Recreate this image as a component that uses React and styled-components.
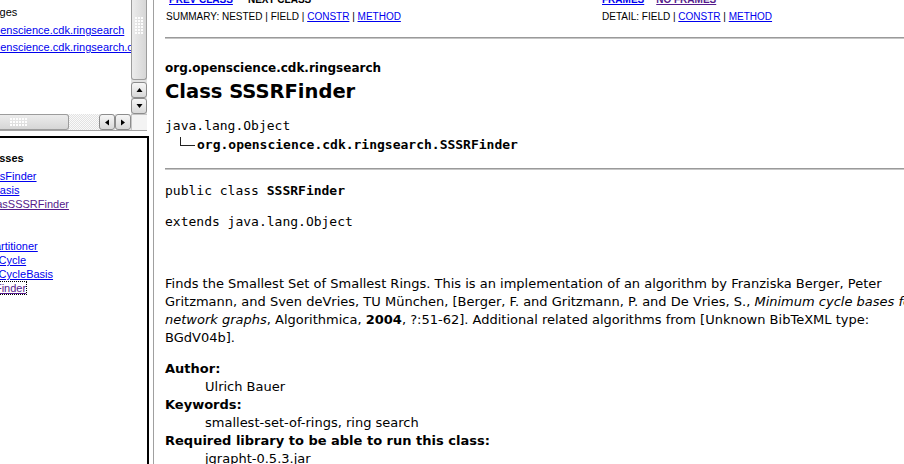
import React from "react";
import styled, { createGlobalStyle } from "styled-components";

const GlobalStyle = createGlobalStyle`
  html, body {
    margin: 0;
    padding: 0;
    background: #fff;
  }
  body {
    width: 904px;
    height: 464px;
    overflow: hidden;
  }
`;

const Window = styled.div`
  display: flex;
  width: 904px;
  height: 464px;
  overflow: hidden;
  background: #fff;
`;

/* ---------- left frames ---------- */

const LeftColumn = styled.div`
  flex: none;
  width: 149px;
  display: flex;
  flex-direction: column;
`;

const TopFrame = styled.div`
  flex: none;
  width: 147px;
  height: 130px;
  display: grid;
  grid-template-columns: 131px 16px;
  grid-template-rows: 114px 16px;
  border-bottom: 1px solid #a4a4a4;
`;

const ScrollView = styled.div`
  overflow: hidden;
  font-family: "Liberation Sans", Arial, sans-serif;
  font-size: 11px;
  color: #000;
`;

const Scrolled = styled.div`
  margin-left: ${(p) => -p.$x}px;
  padding-top: ${(p) => p.$top}px;
  white-space: nowrap;
`;

const FrameHeading = styled.div`
  line-height: ${(p) => p.$lh}px;
  font-weight: ${(p) => (p.$bold ? 700 : 400)};
`;

const FrameItem = styled.div`
  line-height: ${(p) => p.$lh}px;
  min-height: ${(p) => p.$lh}px;
`;

const FrameLink = styled.a`
  color: ${(p) => (p.$visited ? "#551a8b" : "#0000ee")};
  text-decoration: underline;
  cursor: pointer;
  outline: ${(p) => (p.$focus ? "1px dotted #000" : "none")};
`;

const VScroll = styled.div`
  display: flex;
  flex-direction: column;
  background: #e2e2e2;
`;

const VThumb = styled.div`
  flex: none;
  height: 80px;
  box-sizing: border-box;
  border: 1px solid #9c9c9c;
  border-top: none;
  border-radius: 0 0 3px 3px;
  background: linear-gradient(to right, #ececec, #d6d6d6);
  display: flex;
  justify-content: center;
  padding-top: 17px;
  margin-bottom: 2px;
`;

const HScroll = styled.div`
  display: flex;
  background: repeating-conic-gradient(#e2e2e2 0 25%, #fafafa 0 50%) 0 0 / 2px 2px;
`;

const HThumb = styled.div`
  flex: none;
  width: 69px;
  box-sizing: border-box;
  border: 1px solid #9c9c9c;
  border-left: none;
  border-radius: 0 3px 3px 0;
  background: linear-gradient(#ececec, #d6d6d6);
  display: flex;
  align-items: center;
  padding-left: 10px;
  margin-right: auto;
`;

const Grip = styled.div`
  width: ${(p) => p.$w}px;
  height: ${(p) => p.$h}px;
  background: radial-gradient(circle at 1px 1px, #fdfdfd 0.9px, transparent 1.1px) 0 0 / 3px 3px;
`;

const ArrowButton = styled.div`
  flex: none;
  width: 16px;
  height: 16px;
  box-sizing: border-box;
  border: 1px solid #8c8c8c;
  border-radius: 3px;
  background: linear-gradient(#f6f6f6, #d8d8d8);
  display: flex;
  align-items: center;
  justify-content: center;
`;

const Corner = styled.div`
  background: #f3f3f3;
  border-left: 1px solid #c4c4c4;
  border-top: 1px solid #c4c4c4;
`;

const BottomFrame = styled.div`
  flex: 1;
  margin-top: 5px;
  width: 149px;
  box-sizing: border-box;
  border-top: 2px solid #000;
  border-right: 2px solid #000;
  overflow: hidden;
  font-family: "Liberation Sans", Arial, sans-serif;
  font-size: 11px;
`;

const Splitter = styled.div`
  flex: none;
  width: 4px;
  border-right: 1px solid #a0a0a0;
`;

/* ---------- right frame ---------- */

const RightFrame = styled.div`
  flex: 1;
  overflow: hidden;
  padding-left: 11px;
  font-family: "DejaVu Sans", sans-serif;
  font-size: 13px;
  color: #000;
`;

const Page = styled.div`
  width: 758px;
  margin-top: -7px;
`;

const NavBar = styled.div`
  display: grid;
  grid-template-columns: 437px auto;
  row-gap: 4px;
  font-family: "Liberation Sans", Arial, sans-serif;
  font-size: 10px;
  line-height: 13px;
  white-space: nowrap;
`;

const NavCell = styled.div`
  font-weight: ${(p) => (p.$bold ? 700 : 400)};
  padding-left: ${(p) => p.$pad || 0}px;
`;

const NavLink = styled.a`
  color: ${(p) => (p.$visited ? "#551a8b" : "#0000ee")};
  text-decoration: underline;
  margin-left: ${(p) => p.$gap || 0}px;
  cursor: pointer;
`;

const NavText = styled.span`
  margin-left: ${(p) => p.$gap || 0}px;
`;

const Rule = styled.hr`
  margin: ${(p) => p.$top}px 0 0;
  height: 0;
  border: none;
  border-top: 1px solid #9a9a9a;
  border-bottom: 1px solid #c6c6c6;
`;

const PackageName = styled.div`
  margin-top: 22px;
  font-size: 12px;
  line-height: 15px;
  font-weight: 700;
`;

const ClassTitle = styled.h2`
  margin: 4px 0 0;
  font-size: 19.5px;
  line-height: 23px;
  font-weight: 700;
`;

const Tree = styled.div`
  margin-top: 13px;
  font-family: "DejaVu Sans Mono", monospace;
  font-size: 13px;
`;

const TreeRow = styled.div`
  line-height: 19px;
  height: 19px;
  display: flex;
  align-items: center;
  padding-left: ${(p) => p.$indent || 0}px;
  font-weight: ${(p) => (p.$bold ? 700 : 400)};
`;

const Elbow = styled.span`
  display: inline-block;
  width: 14px;
  height: 8px;
  margin: -6px 2px 0 0;
  border-left: 1px solid #222;
  border-bottom: 1px solid #222;
`;

const Code = styled.div`
  margin-top: ${(p) => p.$top}px;
  font-family: "DejaVu Sans Mono", monospace;
  font-size: 13px;
  line-height: 18px;
`;

const Description = styled.p`
  margin: 44px 0 0;
  line-height: 18px;
`;

const TagList = styled.dl`
  margin: 13px 0 0;
  line-height: 18px;
`;

const TagName = styled.dt`
  font-weight: 700;
`;

const TagValue = styled.dd`
  margin-left: 40px;
`;

const Triangle = ({ dir }) => {
  const pts = {
    up: "0.5,5 3.5,1 6.5,5",
    down: "0.5,1 3.5,5 6.5,1",
    left: "5,0.5 1,3.5 5,6.5",
    right: "1,0.5 5,3.5 1,6.5",
  }[dir];
  const vertical = dir === "up" || dir === "down";
  return (
    <svg width={vertical ? 7 : 6} height={vertical ? 6 : 7} viewBox={vertical ? "0 0 7 6" : "0 0 6 7"}>
      <polygon points={pts} fill="#000" />
    </svg>
  );
};

const classes = [
  { name: "AllRingsFinder" },
  { name: "CycleBasis" },
  { name: "FiguerasSSSRFinder", visited: true },
  null,
  null,
  { name: "RingPartitioner" },
  { name: "SimpleCycle" },
  { name: "SimpleCycleBasis" },
  { name: "SSSRFinder", visited: true, focus: true },
];

export default function App() {
  return (
    <Window>
      <GlobalStyle />
      <LeftColumn>
        <TopFrame>
          <ScrollView>
            <Scrolled $x={31} $top={4}>
              <FrameHeading $lh={17.5}>Packages</FrameHeading>
              <FrameItem $lh={17.5}>
                <FrameLink>org.openscience.cdk.ringsearch</FrameLink>
              </FrameItem>
              <FrameItem $lh={17.5}>
                <FrameLink>org.openscience.cdk.ringsearch.cyclebasis</FrameLink>
              </FrameItem>
            </Scrolled>
          </ScrollView>
          <VScroll>
            <VThumb>
              <Grip $w={9} $h={18} />
            </VThumb>
            <ArrowButton>
              <Triangle dir="up" />
            </ArrowButton>
            <ArrowButton>
              <Triangle dir="down" />
            </ArrowButton>
          </VScroll>
          <HScroll>
            <HThumb>
              <Grip $w={18} $h={9} />
            </HThumb>
            <ArrowButton>
              <Triangle dir="left" />
            </ArrowButton>
            <ArrowButton>
              <Triangle dir="right" />
            </ArrowButton>
          </HScroll>
          <Corner />
        </TopFrame>
        <BottomFrame>
          <Scrolled $x={35} $top={13}>
            <FrameHeading $lh={15} $bold>
              All Classes
            </FrameHeading>
            <div style={{ height: 3 }} />
            {classes.map((c, i) => (
              <FrameItem key={i} $lh={14}>
                {c && (
                  <FrameLink $visited={c.visited} $focus={c.focus}>
                    {c.name}
                  </FrameLink>
                )}
              </FrameItem>
            ))}
          </Scrolled>
        </BottomFrame>
      </LeftColumn>
      <Splitter />
      <RightFrame>
        <Page>
          <NavBar>
            <NavCell $bold $pad={4}>
              <NavLink>PREV CLASS</NavLink>
              <NavText $gap={15}>NEXT CLASS</NavText>
            </NavCell>
            <NavCell $bold>
              <NavLink>FRAMES</NavLink>
              <NavLink $visited $gap={12}>
                NO FRAMES
              </NavLink>
            </NavCell>
            <NavCell $pad={1}>
              SUMMARY: NESTED | FIELD | <NavLink>CONSTR</NavLink> | <NavLink>METHOD</NavLink>
            </NavCell>
            <NavCell>
              DETAIL: FIELD | <NavLink>CONSTR</NavLink> | <NavLink>METHOD</NavLink>
            </NavCell>
          </NavBar>
          <Rule $top={14} />
          <PackageName>org.openscience.cdk.ringsearch</PackageName>
          <ClassTitle>Class SSSRFinder</ClassTitle>
          <Tree>
            <TreeRow>java.lang.Object</TreeRow>
            <TreeRow $indent={15} $bold>
              <Elbow />
              org.openscience.cdk.ringsearch.SSSRFinder
            </TreeRow>
          </Tree>
          <Rule $top={14} />
          <Code $top={12}>
            public class <b>SSSRFinder</b>
          </Code>
          <Code $top={13}>extends java.lang.Object</Code>
          <Description>
            Finds the Smallest Set of Smallest Rings. This is an implementation of an algorithm by
            Franziska Berger, Peter Gritzmann, and Sven deVries, TU München, [Berger, F. and
            Gritzmann, P. and De Vries, S., <i>Minimum cycle bases for network graphs</i>,
            Algorithmica, <b>2004</b>, ?:51-62]. Additional related algorithms from [Unknown
            BibTeXML type: BGdV04b].
          </Description>
          <TagList>
            <TagName>Author:</TagName>
            <TagValue>Ulrich Bauer</TagValue>
            <TagName>Keywords:</TagName>
            <TagValue>smallest-set-of-rings, ring search</TagValue>
            <TagName>Required library to be able to run this class:</TagName>
            <TagValue>jgrapht-0.5.3.jar</TagValue>
          </TagList>
        </Page>
      </RightFrame>
    </Window>
  );
}
